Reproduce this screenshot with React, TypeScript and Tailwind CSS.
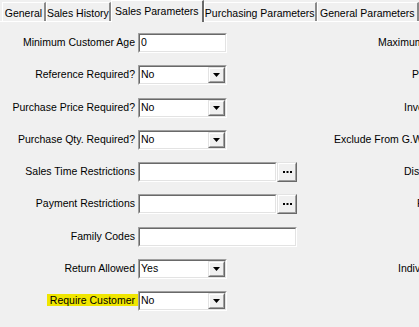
import React from "react";

type Row = {
  label: string;
  kind: "edit" | "select" | "lookup" | "wide";
  value?: string;
  right?: { text: string; pad: string };
  highlight?: boolean;
};

const rows: Row[] = [
  { label: "Minimum Customer Age", kind: "edit", value: "0", right: { text: "Maximum Customer Age", pad: "pl-[80px]" } },
  { label: "Reference Required?", kind: "select", value: "No", right: { text: "Points Required?", pad: "pl-[114px]" } },
  { label: "Purchase Price Required?", kind: "select", value: "No", right: { text: "Invoice Required?", pad: "pl-[106px]" } },
  { label: "Purchase Qty. Required?", kind: "select", value: "No", right: { text: "Exclude From G.W.P. Calculation", pad: "pl-[36px]" } },
  { label: "Sales Time Restrictions", kind: "lookup", right: { text: "Discount Restrictions", pad: "pl-[106px]" } },
  { label: "Payment Restrictions", kind: "lookup", right: { text: "Fidelity Restrictions", pad: "pl-[119px]" } },
  { label: "Family Codes", kind: "wide" },
  { label: "Return Allowed", kind: "select", value: "Yes", right: { text: "Individual Return", pad: "pl-[100px]" } },
  { label: "Require Customer", kind: "select", value: "No", highlight: true },
];

const tabs = [
  { name: "General", w: "w-[47px]" },
  { name: "Sales History", w: "w-[69px]" },
  { name: "Sales Parameters", w: "w-[100px]", active: true },
  { name: "Purchasing Parameters", w: "w-[119px]" },
  { name: "General Parameters", w: "w-[110px]" },
];

function Sunken({ className, children }: { className: string; children?: React.ReactNode }) {
  return (
    <div className={`border border-t-[#a0a0a0] border-l-[#a0a0a0] border-b-white border-r-white ${className}`}>
      <div className="h-full border border-t-[#696969] border-l-[#696969] border-b-[#e3e3e3] border-r-[#e3e3e3] bg-white flex items-center">
        {children}
      </div>
    </div>
  );
}

function Raised({ className, children }: { className: string; children?: React.ReactNode }) {
  return (
    <div className={`border border-t-[#e3e3e3] border-l-[#e3e3e3] border-b-[#696969] border-r-[#696969] ${className}`}>
      <div className="h-full border border-t-white border-l-white border-b-[#a0a0a0] border-r-[#a0a0a0] bg-[#f0f0f0] flex items-center justify-center">
        {children}
      </div>
    </div>
  );
}

function Control({ row }: { row: Row }) {
  if (row.kind === "edit") {
    return (
      <Sunken className="w-[89px] h-[20px]">
        <span className="pl-[1px]">{row.value}</span>
      </Sunken>
    );
  }
  if (row.kind === "select") {
    return (
      <Sunken className="w-[89px] h-[20px]">
        <span className="pl-[1px] flex-1">{row.value}</span>
        <Raised className="w-[17px] h-[16px]">
          <svg width="7" height="4" viewBox="0 0 7 4">
            <path d="M0 0h7L3.5 4z" fill="#000" />
          </svg>
        </Raised>
      </Sunken>
    );
  }
  if (row.kind === "lookup") {
    return (
      <div className="flex">
        <Sunken className="w-[139px] h-[20px]" />
        <Raised className="w-[20px] h-[20px]">
          <svg width="9" height="2" viewBox="0 0 9 2">
            <rect x="0" y="0" width="2" height="2" fill="#000" />
            <rect x="3.5" y="0" width="2" height="2" fill="#000" />
            <rect x="7" y="0" width="2" height="2" fill="#000" />
          </svg>
        </Raised>
      </div>
    );
  }
  return <Sunken className="w-[159px] h-[20px]" />;
}

export default function App() {
  return (
    <div
      className="w-[419px] h-[327px] overflow-hidden bg-[#f0f0f0] text-black text-[10.5px] whitespace-nowrap"
      style={{ fontFamily: '"Liberation Sans", Arial, sans-serif' }}
    >
      {/* Tabs */}
      <div className="flex items-end h-[22px] pl-[2px] border-b border-white">
        {tabs.map((t) =>
          t.active ? (
            <div
              key={t.name}
              className={`${t.w} h-[22px] -mb-px relative bg-[#f0f0f0] border-l border-t border-white border-r-2 border-r-[#696969] flex items-start justify-center pt-[3px]`}
            >
              {t.name}
            </div>
          ) : (
            <div
              key={t.name}
              className={`${t.w} h-[19px] border-l border-t border-white border-r-2 border-r-[#8a8a8a] flex items-start justify-center pt-[3px]`}
            >
              {t.name}
            </div>
          )
        )}
      </div>

      {/* Form */}
      <div className="pt-[11px] flex flex-col gap-[12.25px]">
        {rows.map((r) => (
          <div key={r.label} className="grid grid-cols-[138px_160px_1fr] h-[20px] items-center">
            <div className="text-right">
              {r.highlight ? (
                <span className="inline-block bg-[#f0e600] pl-[3px] pr-[3px] leading-[12px] -mt-[3px]">{r.label}</span>
              ) : (
                <span className="pr-[3px]">{r.label}</span>
              )}
            </div>
            <Control row={r} />
            <div className={`overflow-hidden ${r.right ? r.right.pad : ""}`}>{r.right?.text}</div>
          </div>
        ))}
      </div>
    </div>
  );
}
